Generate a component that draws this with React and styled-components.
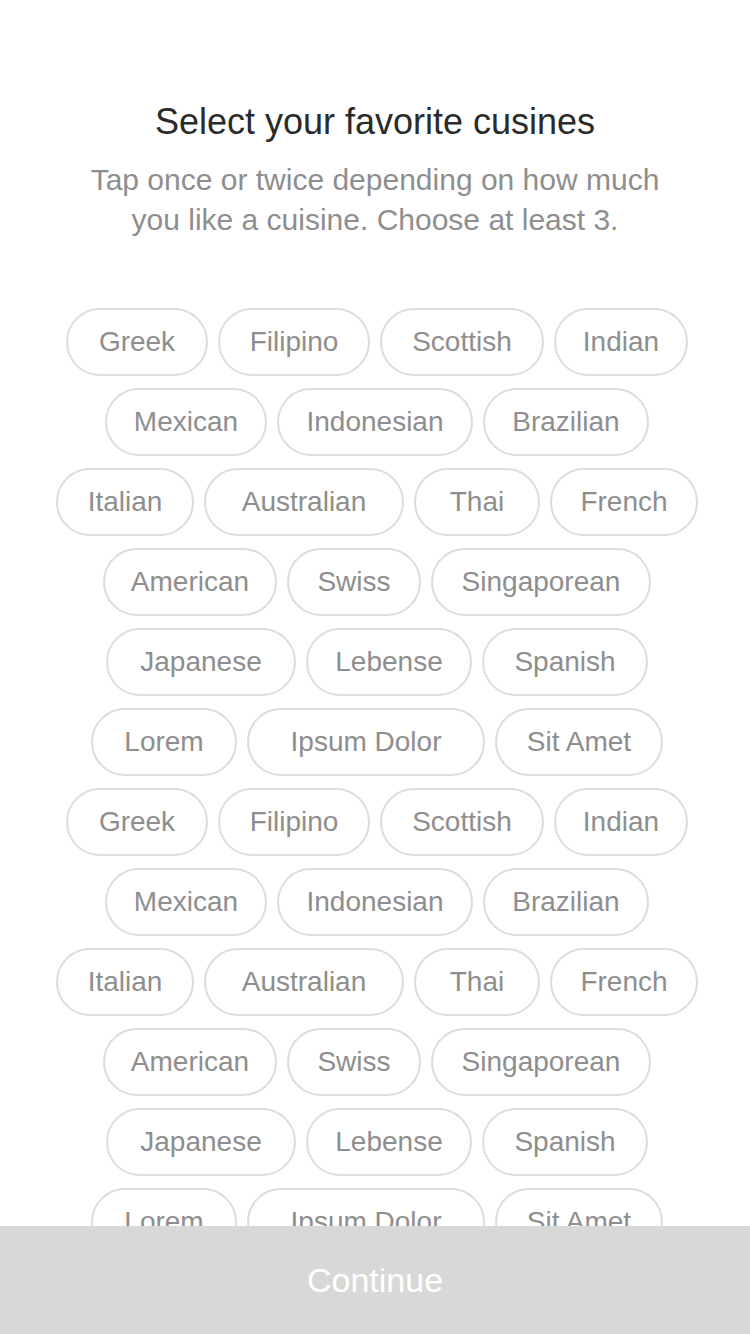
import React from 'react';
import styled, { createGlobalStyle } from 'styled-components';

const GlobalStyle = createGlobalStyle`
  body {
    margin: 0;
    background: #fff;
    font-family: "Liberation Sans", Arial, sans-serif;
  }
`;

const Page = styled.div`
  width: 750px;
  height: 1334px;
  overflow: hidden;
  position: relative;
  box-sizing: border-box;
  padding-top: 100px;
`;

const Header = styled.header`
  text-align: center;
  margin-bottom: 68px;
`;

const Title = styled.h1`
  margin: 0 0 16px;
  font-size: 36px;
  font-weight: 400;
  line-height: 44px;
  color: #2b2b2b;
`;

const Subtitle = styled.p`
  margin: 0 auto;
  width: 600px;
  font-size: 30px;
  line-height: 40px;
  color: #8e8e8e;
`;

const ChipList = styled.div`
  display: flex;
  flex-direction: column;
  gap: 12px;
`;

const ChipRow = styled.div`
  display: flex;
  justify-content: center;
  gap: 10px;
  padding-left: 4px;
`;

const Chip = styled.button`
  width: ${(p) => p.$w}px;
  height: 68px;
  box-sizing: border-box;
  padding: 0;
  border: 2px solid #dcdcdc;
  border-radius: 34px;
  background: #fff;
  font-family: "Liberation Sans", Arial, sans-serif;
  font-size: 28px;
  color: #8e8e8e;
  white-space: nowrap;
`;

const ContinueBar = styled.button`
  position: absolute;
  left: 0;
  right: 0;
  bottom: 0;
  height: 108px;
  border: none;
  background: #d8d8d8;
  color: #fff;
  font-family: "Liberation Sans", Arial, sans-serif;
  font-size: 34px;
`;

const block = [
  [['Greek', 142], ['Filipino', 152], ['Scottish', 164], ['Indian', 134]],
  [['Mexican', 162], ['Indonesian', 196], ['Brazilian', 166]],
  [['Italian', 138], ['Australian', 200], ['Thai', 126], ['French', 148]],
  [['American', 174], ['Swiss', 134], ['Singaporean', 220]],
  [['Japanese', 190], ['Lebense', 166], ['Spanish', 166]],
  [['Lorem', 146], ['Ipsum Dolor', 238], ['Sit Amet', 168]],
];

const rows = [...block, ...block];

const App = () => {
  return (
    <Page>
      <GlobalStyle />
      <Header>
        <Title>Select your favorite cusines</Title>
        <Subtitle>Tap once or twice depending on how much you like a cuisine. Choose at least 3.</Subtitle>
      </Header>
      <ChipList>
        {rows.map((row, i) => (
          <ChipRow key={i}>
            {row.map(([name, w]) => (
              <Chip key={name} $w={w}>{name}</Chip>
            ))}
          </ChipRow>
        ))}
      </ChipList>
      <ContinueBar>Continue</ContinueBar>
    </Page>
  );
};

export default App;
